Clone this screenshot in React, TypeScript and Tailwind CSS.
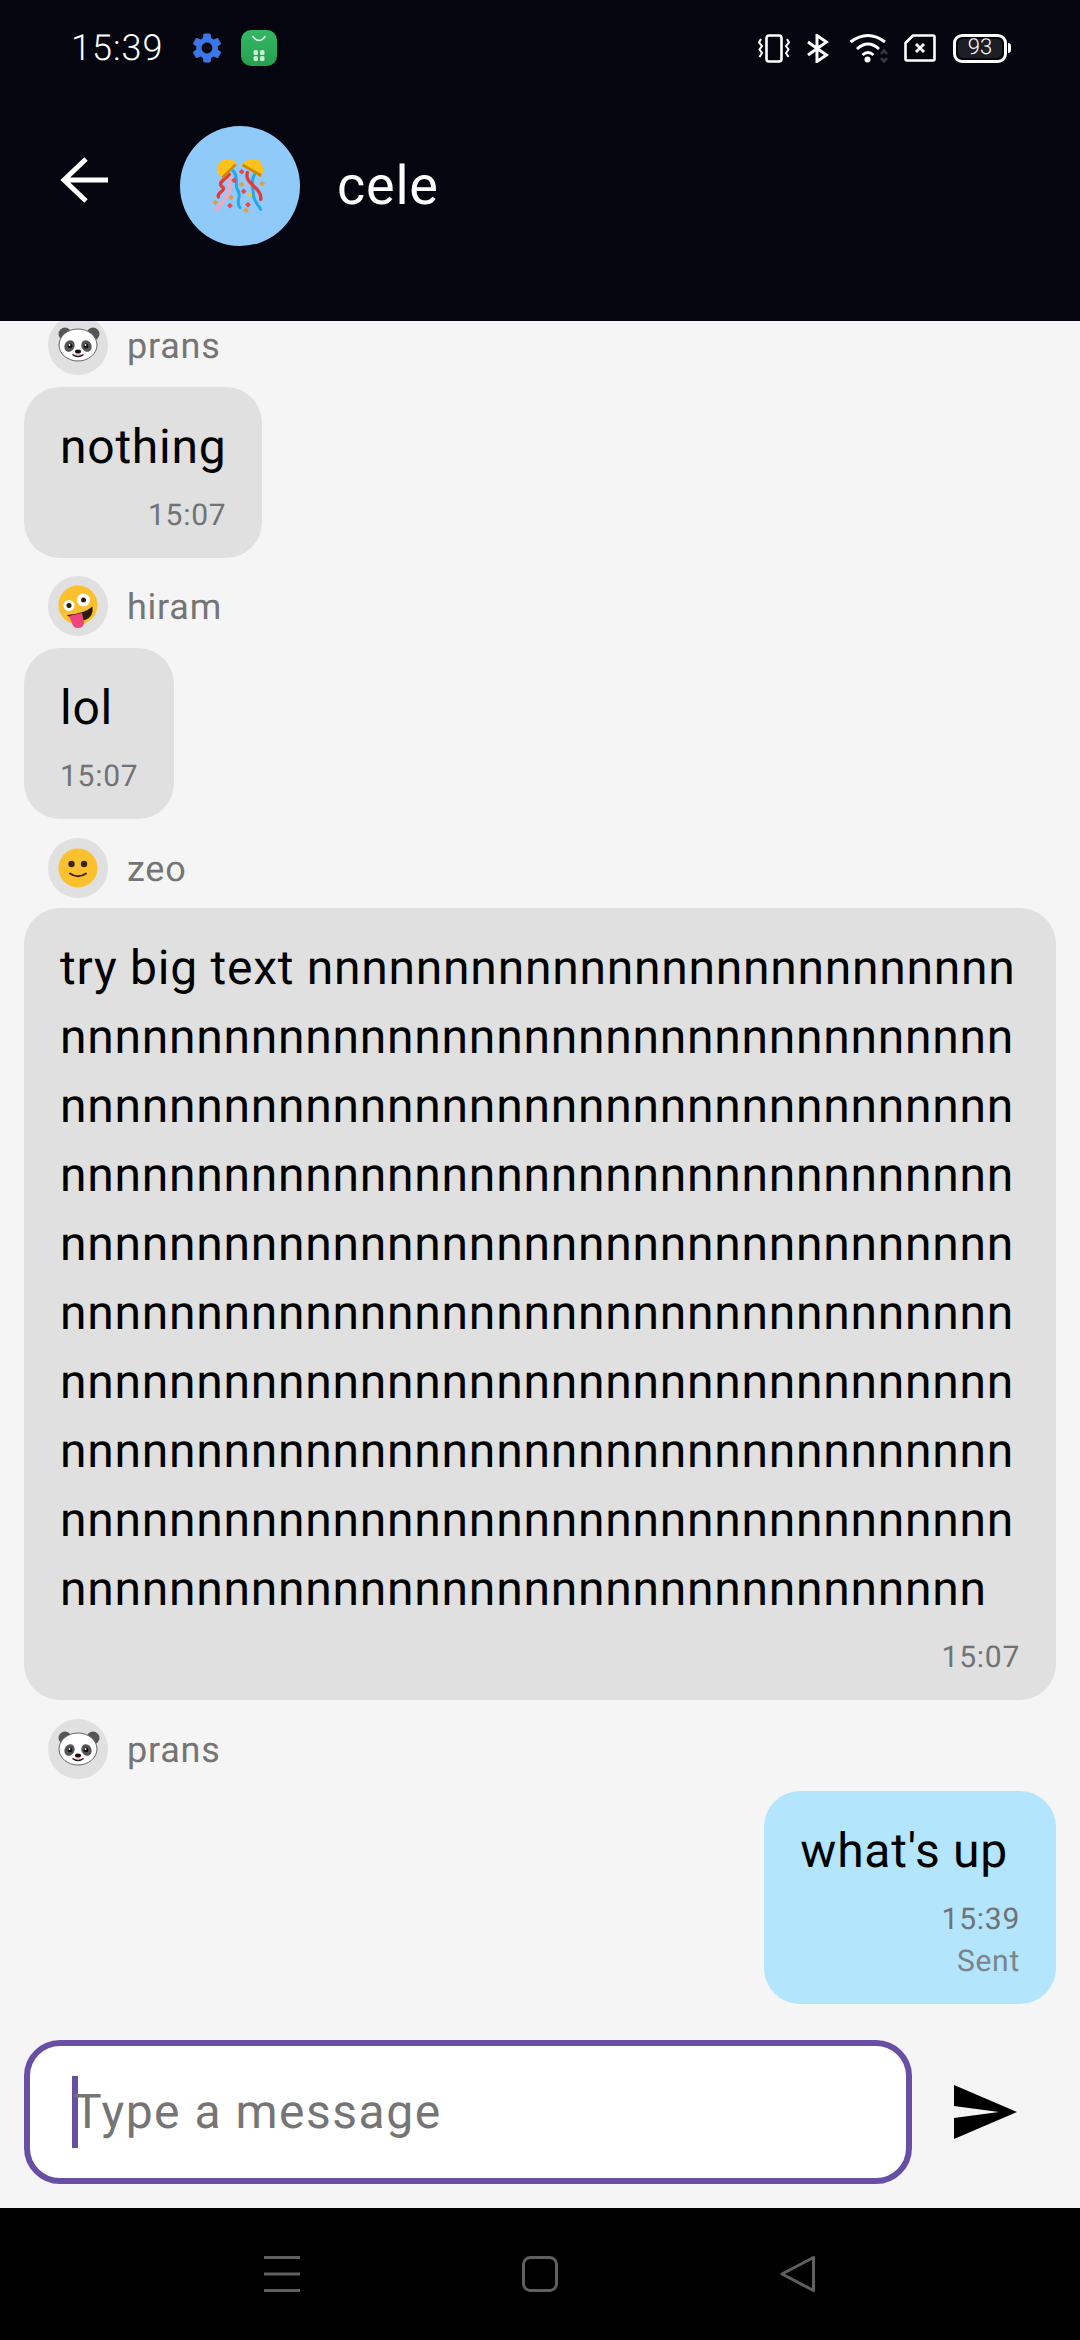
import React from 'react';
import { MdSettings } from 'react-icons/md';

const longText = 'try big text ' + 'n'.repeat(340);

const Panda = () => (
  <svg viewBox="0 0 60 60" className="w-[60px] h-[60px]">
    <circle cx="17" cy="19" r="6.5" fill="#555" />
    <circle cx="45" cy="19" r="6.5" fill="#555" />
    <ellipse cx="30" cy="30" rx="19" ry="16" fill="#fff" stroke="#666" strokeWidth="1" />
    <ellipse cx="21.5" cy="31" rx="5" ry="6" fill="#555" transform="rotate(25 21.5 31)" />
    <ellipse cx="38.5" cy="31" rx="5" ry="6" fill="#555" transform="rotate(-25 38.5 31)" />
    <circle cx="22" cy="31" r="2.4" fill="#111" />
    <circle cx="38" cy="31" r="2.4" fill="#111" />
    <circle cx="21.5" cy="30" r="0.9" fill="#fff" />
    <circle cx="37.5" cy="30" r="0.9" fill="#fff" />
    <ellipse cx="30" cy="36.5" rx="3" ry="2" fill="#111" />
    <path d="M24.5 39.5 Q30 44 35.500 39.5" stroke="#111" strokeWidth="1.2" fill="#e88" />
  </svg>
);

const Zany = () => (
  <svg viewBox="0 0 60 60" className="w-[60px] h-[60px]">
    <circle cx="30" cy="29" r="19.500" fill="#fbc02d" />
    <circle cx="21" cy="29.500" r="5.500" fill="#fff" />
    <circle cx="21" cy="29.500" r="2.500" fill="#2b1a0e" />
    <circle cx="35.500" cy="24" r="6.500" fill="#fff" />
    <circle cx="35.500" cy="24" r="2.500" fill="#2b1a0e" />
    <path d="M19 39 Q36 38 44.500 30.500 Q46 41 37 44 Q27 47 19 39Z" fill="#2b1a0e" />
    <path d="M21 40 Q29 38 34 37 L36 46 Q36 52 30 52 Q25 52 24 47Z" fill="#f0447f" />
  </svg>
);

const Smile = () => (
  <svg viewBox="0 0 60 60" className="w-[60px] h-[60px]">
    <circle cx="30" cy="30" r="19.500" fill="#fbc02d" />
    <circle cx="23.500" cy="26" r="3.200" fill="#3a2412" />
    <circle cx="36" cy="26" r="3.200" fill="#3a2412" />
    <path d="M22 35.500 Q30 41 38 35.500" stroke="#3a2412" strokeWidth="2" strokeLinecap="round" fill="none" />
  </svg>
);

const Confetti = () => (
  <svg viewBox="0 0 300 270" className="w-[100px] h-[90px]">
    <g fill="none" strokeLinecap="round">
      <path d="M122 110 C118 140 120 160 100 180 L78 208" stroke="#f4a6c0" strokeWidth="10" />
      <path d="M118 100 C100 120 80 125 100 140 C105 150 80 155 85 168" stroke="#e53935" strokeWidth="10" />
      <path d="M128 88 C150 110 130 130 145 150 C155 170 135 180 150 200" stroke="#29a7e1" strokeWidth="9" />
      <path d="M195 98 C180 120 190 140 190 160 C190 180 205 190 212 205" stroke="#29a7e1" strokeWidth="9" />
      <path d="M172 95 C165 120 190 130 205 150 C215 165 213 170 212 175" stroke="#e53935" strokeWidth="10" />
    </g>
    <path d="M82 85 C82 60 105 50 125 55 C135 60 140 70 140 73 L100 112 C88 105 82 98 82 85Z" fill="#fcc21b" />
    <path d="M140 73 L100 112 L94 107 L134 68Z" fill="#c98a0a" />
    <path d="M155 75 C160 60 180 50 200 55 C215 62 222 80 218 95 L212 108 L155 75Z" fill="#fcc21b" />
    <path d="M155 75 L212 108 L216 100 L160 68Z" fill="#c98a0a" />
    <g fill="#e5484d">
      <rect x="149" y="86" width="12" height="12" transform="rotate(45 155 92)" />
      <rect x="126" y="112" width="12" height="12" transform="rotate(45 132 118)" />
      <rect x="155" y="145" width="12" height="12" transform="rotate(45 161 151)" />
      <rect x="114" y="188" width="12" height="12" transform="rotate(45 120 194)" />
      <rect x="168" y="185" width="12" height="12" transform="rotate(45 174 191)" />
    </g>
    <g fill="#eb9a3c">
      <rect x="149" y="124" width="12" height="12" transform="rotate(45 155 130)" />
      <rect x="211" y="122" width="12" height="12" transform="rotate(45 217 128)" />
      <rect x="117" y="163" width="12" height="12" transform="rotate(45 123 169)" />
      <rect x="162" y="202" width="12" height="12" transform="rotate(45 168 208)" />
      <rect x="70" y="178" width="12" height="12" transform="rotate(45 76 184)" />
    </g>
    <rect x="173" y="155" width="12" height="12" transform="rotate(45 179 161)" fill="#f5c531" />
  </svg>
);

const StoreIcon = () => (
  <div className="w-[36px] h-[36px] rounded-[10px] bg-gradient-to-b from-[#34b866] to-[#25a04f] flex items-center justify-center">
    <svg viewBox="0 0 36 36" className="w-[36px] h-[36px]">
      <path d="M11.500 6 Q18 15 24.500 6" stroke="#e8f8ee" strokeWidth="1.600" fill="none" />
      <g fill="#c9efd6">
        <rect x="12.500" y="20" width="4.500" height="5" rx="1.500" />
        <rect x="19" y="20" width="4.500" height="5" rx="1.500" />
        <rect x="12.500" y="26" width="4.500" height="5" rx="1.500" />
        <rect x="19" y="26" width="4.500" height="5" rx="1.500" />
      </g>
    </svg>
  </div>
);

const VibrateIcon = () => (
  <svg viewBox="0 0 32 29" className="w-[32px] h-[29px]" fill="none" stroke="#fff">
    <rect x="8.500" y="1.500" width="15" height="26" rx="2.500" strokeWidth="2.600" />
    <path d="M3 5 L1 8.500 L4 12 L1.500 15.500 L4 19 L1.500 23" strokeWidth="2" />
    <path d="M29 5 L31 8.500 L28 12 L30.500 15.500 L28 19 L30.500 23" strokeWidth="2" />
  </svg>
);

const BluetoothIcon = () => (
  <svg viewBox="0 0 22 29" className="w-[22px] h-[29px]" fill="none" stroke="#fff" strokeWidth="3">
    <path d="M1 8 L19.500 21 L10 27.500 L10 1.500 L19.500 8 L1 21" />
  </svg>
);

const WifiIcon = () => (
  <svg viewBox="0 0 40 30" className="w-[40px] h-[30px]" fill="none" stroke="#fff" strokeWidth="3">
    <path d="M1.500 9 Q19 -4 36 9" />
    <path d="M8 16 Q19 6 30 16" />
    <path d="M13.500 22 Q19 17 24.500 22" />
    <circle cx="18.500" cy="26.500" r="3" fill="#fff" stroke="none" />
    <path d="M32 21 L35 17.500 L38 21 M32 25 L35 28.500 L38 25" stroke="#3a3a40" strokeWidth="2.500" />
  </svg>
);

const SimIcon = () => (
  <svg viewBox="0 0 32 28" className="w-[32px] h-[28px]" fill="none" stroke="#fff">
    <path d="M9 1.500 L29 1.500 Q30.500 1.500 30.500 3 L30.500 25 Q30.500 26.500 29 26.500 L3 26.500 Q1.500 26.500 1.500 25 L1.500 9Z" strokeWidth="2.600" strokeLinejoin="round" />
    <path d="M12 10 L20 18 M20 10 L12 18" strokeWidth="2.800" />
  </svg>
);

const Battery = () => (
  <div className="flex items-center">
    <div className="w-[54px] h-[29px] rounded-[9px] border-[3px] border-white p-[2px] flex">
      <div className="flex-1 rounded-[5px] bg-[#1e1e26] flex items-center justify-center text-white text-[22px] leading-none font-light">93</div>
    </div>
    <div className="ml-[1px] w-[3px] h-[10px] rounded-r-sm bg-white" />
  </div>
);

const Sender = ({ name, children }: { name: string; children: React.ReactNode }) => (
  <div className="flex items-center pl-[48px] gap-[19px] h-[60px] shrink-0">
    <div className="w-[60px] h-[60px] rounded-full bg-[#e0e0e0]">{children}</div>
    <span className="pt-[2px] text-[36px] leading-none tracking-[0.75px] text-[#757575]">{name}</span>
  </div>
);

const Bubble = ({ text, time, sent }: { text: string; time: string; sent?: boolean }) => (
  <div
    className={`max-w-[1032px] px-[36px] pt-[25px] pb-[21px] rounded-[36px] flex flex-col ${
      sent ? 'self-end bg-[#b3e5fc] mr-[24px]' : 'self-start bg-[#e0e0e0] ml-[24px]'
    }`}
  >
    <p className={`text-[48px] leading-[69px] tracking-[0.75px] text-black break-all ${sent ? 'pr-[12px]' : ''}`}>{text}</p>
    <span className="mt-[14px] self-end text-[30px] leading-[42px] tracking-[0.75px] text-[#6f7375]">{time}</span>
    {sent && <span className="self-end text-[30px] leading-[42px] tracking-[0.75px] text-[#7d8488]">Sent</span>}
  </div>
);

const App = () => {
  return (
    <div className="w-[1080px] h-[2340px] flex flex-col bg-[#f5f5f5] overflow-hidden font-['Roboto',sans-serif] [text-rendering:geometricPrecision]">
      <header className="h-[321px] shrink-0 bg-[#05050f] z-10">
        <div className="h-[96px] pl-[71px] pr-[69px] flex items-center justify-between">
          <div className="flex items-center">
            <span className="w-[90px] text-[36px] leading-none tracking-[1px] text-white font-light">15:39</span>
            <MdSettings className="ml-[28px] w-[36px] h-[36px] text-[#3b78e7]" />
            <div className="ml-[16px]">
              <StoreIcon />
            </div>
          </div>
          <div className="flex items-center">
            <VibrateIcon />
            <div className="ml-[17px]"><BluetoothIcon /></div>
            <div className="ml-[20px]"><WifiIcon /></div>
            <div className="ml-[15px]"><SimIcon /></div>
            <div className="ml-[17px]"><Battery /></div>
          </div>
        </div>
        <div className="mt-[30px] pl-[60px] flex items-center">
          <svg viewBox="0 0 48 46" className="w-[48px] h-[46px] mb-[12px]" fill="none" stroke="#fff" strokeWidth="5">
            <path d="M48 23 L4 23 M26 2 L4 23 L26 44" />
          </svg>
          <div className="ml-[72px] w-[120px] h-[120px] rounded-full bg-[#90caf9] flex items-center justify-center">
            <Confetti />
          </div>
          <span className="ml-[37px] pt-[2px] text-[54px] leading-none tracking-[0.75px] text-white">cele</span>
        </div>
      </header>

      <main className="flex-1 min-h-0 overflow-hidden flex flex-col justify-end pb-[36px]">
        <Sender name="prans"><Panda /></Sender>
        <div className="mt-[12px] flex flex-col"><Bubble text="nothing" time="15:07" /></div>
        <div className="mt-[18px]"><Sender name="hiram"><Zany /></Sender></div>
        <div className="mt-[12px] flex flex-col"><Bubble text="lol" time="15:07" /></div>
        <div className="mt-[19px]"><Sender name="zeo"><Smile /></Sender></div>
        <div className="mt-[10px] flex flex-col"><Bubble text={longText} time="15:07" /></div>
        <div className="mt-[19px]"><Sender name="prans"><Panda /></Sender></div>
        <div className="mt-[12px] flex flex-col"><Bubble text="what's up" time="15:39" sent /></div>
      </main>

      <div className="shrink-0 h-[168px] pl-[24px] flex items-start">
        <div className="w-[888px] h-[144px] rounded-[36px] border-[6px] border-[#6750a4] bg-white flex items-center pl-[42px]">
          <div className="w-[6px] h-[72px] bg-[#6750a4]" />
          <span className="-ml-[5px] text-[48px] leading-none tracking-[1.5px] text-[#757575]">Type a message</span>
        </div>
        <svg viewBox="0 0 24 24" className="ml-[36px] mt-[36px] w-[72px] h-[72px]" fill="#000">
          <path d="M2.010 21 23 12 2.010 3 2 10l15 2-15 2z" />
        </svg>
      </div>

      <nav className="shrink-0 h-[132px] bg-black flex justify-center gap-[222px] pt-[48px]">
        <svg viewBox="0 0 36 36" className="w-[36px] h-[36px]" fill="none" stroke="#5f5f5f" strokeWidth="3">
          <path d="M0 1.500 H36 M0 18 H36 M0 34.500 H36" />
        </svg>
        <svg viewBox="0 0 36 36" className="w-[36px] h-[36px]" fill="none" stroke="#5f5f5f" strokeWidth="3">
          <rect x="1.500" y="1.500" width="33" height="33" rx="7" />
        </svg>
        <svg viewBox="0 0 36 36" className="w-[36px] h-[36px]" fill="none" stroke="#5f5f5f" strokeWidth="3" strokeLinejoin="round">
          <path d="M2 18 L33.500 1.500 L33.500 34.500Z" />
        </svg>
      </nav>
    </div>
  );
};

export default App;
